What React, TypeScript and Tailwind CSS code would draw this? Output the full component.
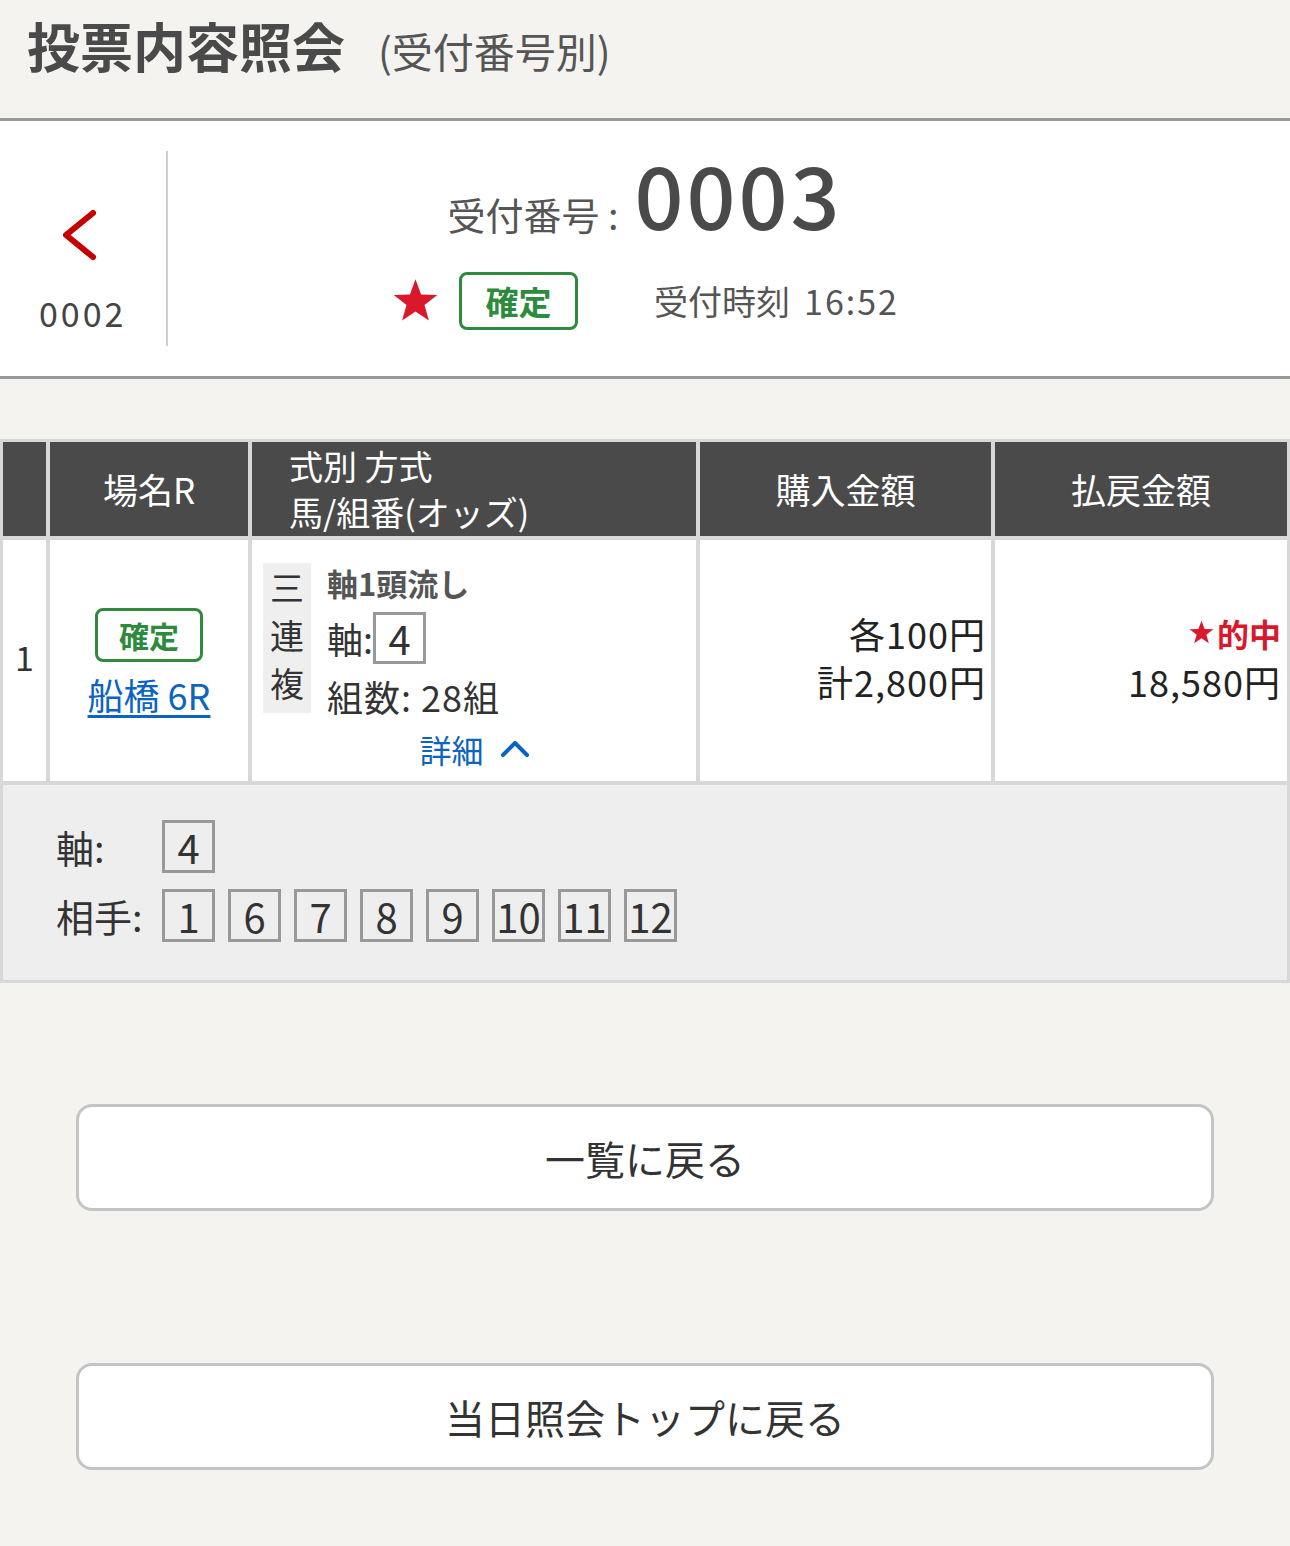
const numBox =
  "flex h-[53px] w-[53px] items-center justify-center border-[3px] border-[#999] text-[40px] leading-none text-[#333]";

function Star({ className }: { className?: string }) {
  return (
    <svg viewBox="0 0 24 23" className={className} fill="currentColor">
      <path d="M12 0.6l2.8 7.6 8.1 0.3-6.4 5 2.2 7.8L12 16.8l-6.7 4.5 2.2-7.8-6.4-5 8.1-0.3z" />
    </svg>
  );
}

function Badge({ big }: { big?: boolean }) {
  return (
    <span
      className={
        big
          ? "flex h-[58px] w-[119px] items-center justify-center rounded-[8px] border-[3px] border-[#2e8b3e] text-[33px] font-bold leading-none text-[#2e8b3e]"
          : "flex h-[54px] w-[108px] items-center justify-center rounded-[8px] border-[3px] border-[#2e8b3e] text-[30px] font-bold leading-none text-[#2e8b3e]"
      }
    >
      確定
    </span>
  );
}

export default function App() {
  const partners = [1, 6, 7, 8, 9, 10, 11, 12];

  return (
    <div className="min-h-[1546px] bg-[#f4f3f0] font-['Noto_Sans_CJK_JP',sans-serif] text-[#333]">
      <header className="flex h-[118px] items-baseline px-[27px] pt-[15px]">
        <h1 className="text-[53px] font-bold leading-[60px] text-[#4a4a4a]">投票内容照会</h1>
        <span className="ml-[33px] text-[41px] leading-[60px] text-[#555]">(受付番号別)</span>
      </header>

      <section className="flex h-[261px] border-y-[3px] border-[#999] bg-white">
        <div className="flex w-[166px] flex-col">
          <svg
            viewBox="0 0 36 52"
            className="ml-[62px] mt-[88px] h-[52px] w-[36px] text-[#c40000]"
            fill="none"
            stroke="currentColor"
            strokeWidth="6"
            strokeLinecap="round"
            strokeLinejoin="round"
          >
            <polyline points="31,4 4,26 31,48" />
          </svg>
          <span className="mt-[32px] pl-[39px] text-[34px] leading-[40px] tracking-[3px] text-[#444]">0002</span>
        </div>
        <div className="my-[30px] w-[2px] bg-[#cfcfcf]" />

        <div className="flex flex-1 flex-col items-center pt-[28px]">
          <div className="flex items-baseline">
            <span className="text-[38px] text-[#555]">受付番号 :</span>
            <span className="ml-[16px] text-[86px] font-medium leading-[88px] tracking-[3px] text-[#4a4a4a]">
              0003
            </span>
          </div>
          <div className="mt-[30px] flex items-center">
            <Star className="h-[46px] w-[49px] text-[#d9182b]" />
            <span className="ml-[19px]">
              <Badge big />
            </span>
            <span className="ml-[76px] text-[34px] leading-[40px] text-[#555]">
              受付時刻<span className="ml-[14px] tracking-[2px]">16:52</span>
            </span>
          </div>
        </div>
        <div className="w-[168px]" />
      </section>

      <div className="mt-[60px] grid grid-cols-[43px_198px_444px_291px_292px] gap-[4px] bg-[#d8d8d8] p-[3px]">
        {/* header */}
        <div className="h-[94px] bg-[#4a4a4a]" />
        <div className="flex h-[94px] items-center justify-center bg-[#4a4a4a] text-[35px] text-white">場名R</div>
        <div className="flex h-[94px] flex-col justify-center bg-[#4a4a4a] pl-[37px] text-[34px] leading-[46px] text-white">
          <span>式別 方式</span>
          <span>馬/組番(オッズ)</span>
        </div>
        <div className="flex h-[94px] items-center justify-center bg-[#4a4a4a] text-[35px] text-white">購入金額</div>
        <div className="flex h-[94px] items-center justify-center bg-[#4a4a4a] text-[35px] text-white">払戻金額</div>

        {/* row */}
        <div className="flex h-[241px] items-center justify-center bg-white pb-[8px] text-[34px]">1</div>
        <div className="flex h-[241px] flex-col items-center justify-center bg-white">
          <Badge />
          <a href="#" className="mt-[12px] text-[36px] leading-[40px] text-[#0b63c2] underline underline-offset-[5px]">
            船橋 6R
          </a>
        </div>
        <div className="flex h-[241px] flex-col bg-white pt-[23px]">
          <div className="flex pl-[11px]">
            <div className="flex h-[150px] w-[48px] flex-col items-center bg-[#efefef] text-[34px] leading-[48px]">
              <span>三</span>
              <span>連</span>
              <span>複</span>
            </div>
            <div className="ml-[16px] flex flex-col">
              <span className="text-[31px] font-bold leading-[40px] text-[#555]">軸1頭流し</span>
              <div className="mt-[9px] flex items-center">
                <span className="text-[36px] leading-[52px]">軸:</span>
                <span className="flex h-[52px] w-[53px] items-center justify-center border-[3px] border-[#999] text-[40px] leading-none">
                  4
                </span>
              </div>
              <span className="mt-[12px] text-[36px] leading-[40px] tracking-[1px]">組数: 28組</span>
            </div>
          </div>
          <div className="mt-[13px] flex items-center justify-center text-[#0b63c2]">
            <span className="text-[32px] leading-[40px]">詳細</span>
            <svg
              viewBox="0 0 28 16"
              className="ml-[17px] h-[16px] w-[28px]"
              fill="none"
              stroke="currentColor"
              strokeWidth="4"
              strokeLinecap="round"
              strokeLinejoin="round"
            >
              <polyline points="2,14 14,2 26,14" />
            </svg>
          </div>
        </div>
        <div className="flex h-[241px] flex-col items-end justify-center bg-white pb-[8px] pr-[5px] text-[36px] leading-[48px] tracking-[1px] text-[#222]">
          <span>各100円</span>
          <span>計2,800円</span>
        </div>
        <div className="flex h-[241px] flex-col items-end justify-center bg-white pb-[8px] pr-[6px] text-[36px] leading-[48px] tracking-[1px] text-[#222]">
          <span className="flex items-center text-[32px] font-bold tracking-normal text-[#d9182b]">
            <Star className="mr-[2px] h-[25px] w-[27px]" />
            的中
          </span>
          <span>18,580円</span>
        </div>

        {/* detail */}
        <div className="col-span-5 flex h-[195px] flex-col gap-[16px] bg-[#eeeeee] pl-[53px] pt-[35px]">
          <div className="flex items-center">
            <span className="w-[106px] text-[38px] leading-[53px]">軸:</span>
            <span className={numBox}>4</span>
          </div>
          <div className="flex items-center">
            <span className="w-[106px] text-[38px] leading-[53px]">相手:</span>
            <div className="flex gap-[13px]">
              {partners.map((n) => (
                <span key={n} className={numBox}>
                  {n}
                </span>
              ))}
            </div>
          </div>
        </div>
      </div>

      <button
        type="button"
        className="mx-[76px] mt-[121px] flex h-[107px] w-[1138px] items-center justify-center rounded-[16px] border-[3px] border-[#c4c4c4] bg-white text-[40px] text-[#333]"
      >
        一覧に戻る
      </button>
      <button
        type="button"
        className="mx-[76px] mt-[152px] flex h-[107px] w-[1138px] items-center justify-center rounded-[16px] border-[3px] border-[#c4c4c4] bg-white text-[40px] text-[#333]"
      >
        当日照会トップに戻る
      </button>
    </div>
  );
}
